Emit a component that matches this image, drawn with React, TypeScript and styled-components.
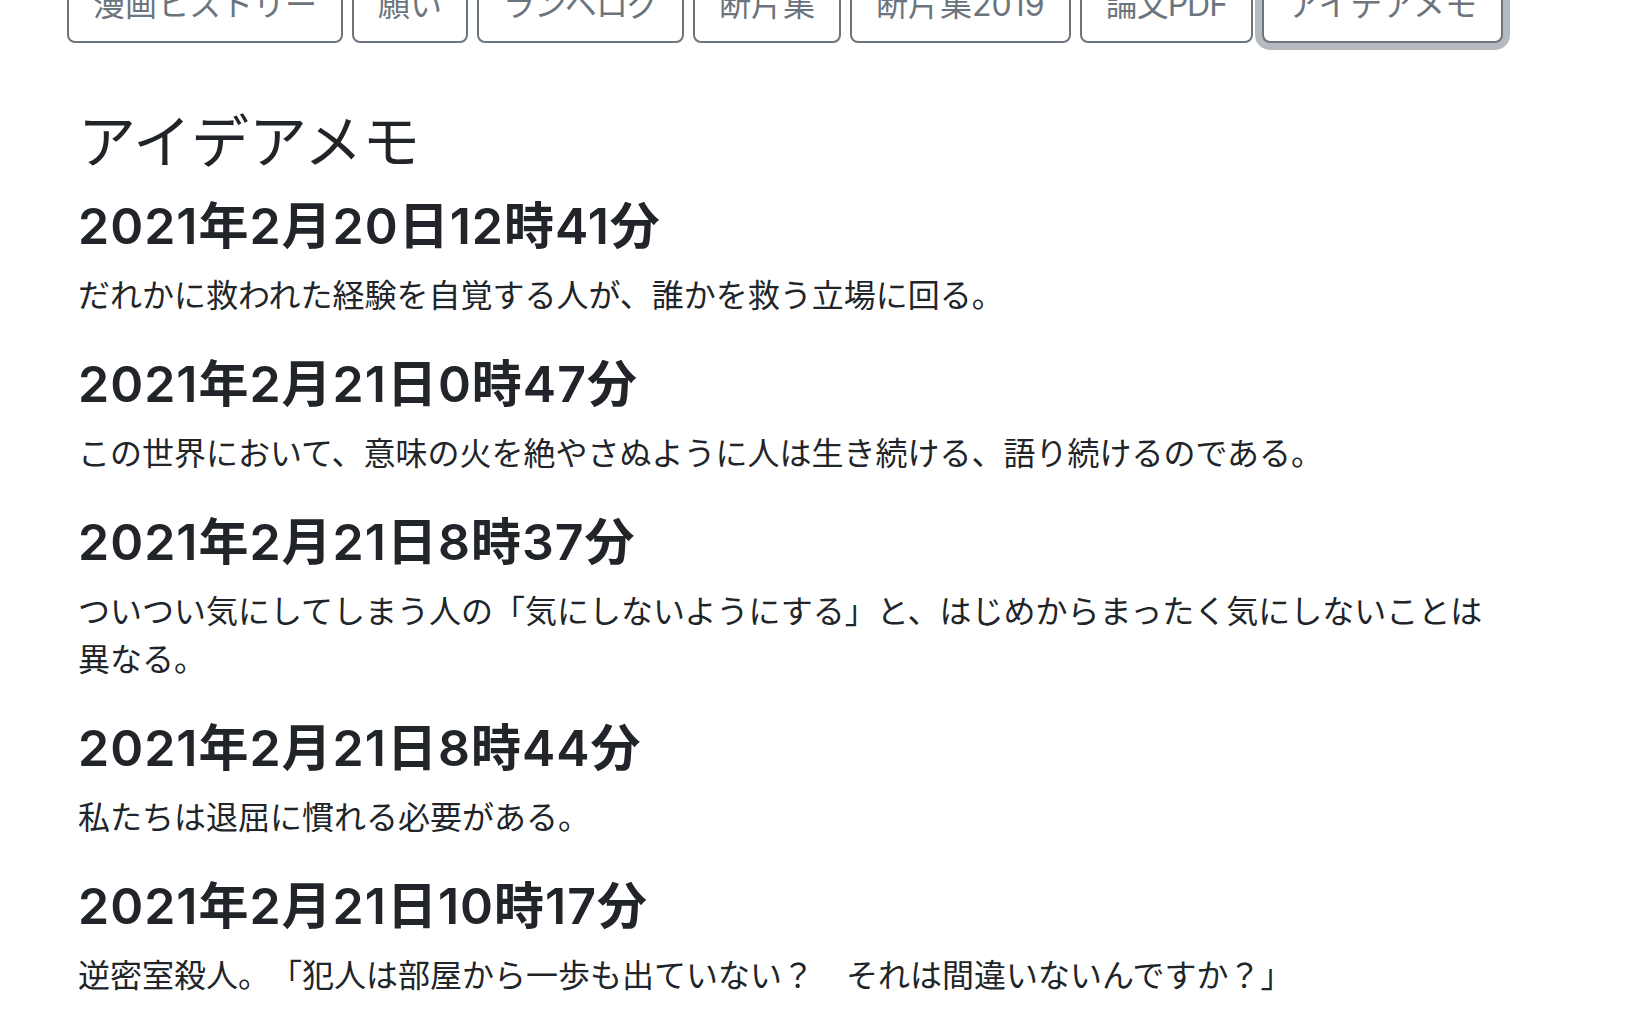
import React from "react";
import styled, { createGlobalStyle } from "styled-components";

const GlobalStyle = createGlobalStyle`
  html, body {
    margin: 0;
    padding: 0;
    background: #ffffff;
  }
  body {
    font-family: Inter, "Noto Sans CJK JP", sans-serif;
    color: #212529;
    font-size: 32px;
    line-height: 48px;
    overflow: hidden;
    text-spacing-trim: space-all;
  }
`;

const Page = styled.div`
  padding-left: 67px;
  width: 1575px;
`;

const Nav = styled.nav`
  display: flex;
  gap: 9px;
  margin-top: -33px;
`;

const TabButton = styled.button<{ $active?: boolean; $tight?: boolean }>`
  font-family: Inter, "Noto Sans CJK JP", sans-serif;
  font-size: 32px;
  line-height: 48px;
  padding: 12px 24px;
  color: #6c757d;
  background: #ffffff;
  border: 2px solid #6c757d;
  border-radius: 8px;
  white-space: nowrap;
  letter-spacing: ${(p) => (p.$tight ? "-1px" : "0")};
  box-shadow: ${(p) => (p.$active ? "0 0 0 7px rgba(108, 117, 125, 0.5)" : "none")};
`;

const Content = styled.main`
  padding-left: 11px;
  margin-top: 66px;
`;

const PageTitle = styled.h3`
  margin: 0 0 21px;
  font-size: 58px;
  line-height: 67px;
  font-weight: 400;
`;

const MemoDate = styled.h4`
  margin: 0 0 17px;
  font-size: 50px;
  line-height: 58px;
  font-weight: 600;
  letter-spacing: 1px;
`;

const MemoText = styled.p`
  margin: 0 0 35px;
  max-width: 1420px;
  text-spacing-trim: space-all;
`;

const tabs = [
  "漫画ヒストリー",
  "願い",
  "ランベログ",
  "断片集",
  "断片集2019",
  "論文PDF",
  "アイデアメモ"
];

const memos = [
  {
    date: "2021年2月20日12時41分",
    text: "だれかに救われた経験を自覚する人が、誰かを救う立場に回る。"
  },
  {
    date: "2021年2月21日0時47分",
    text: "この世界において、意味の火を絶やさぬように人は生き続ける、語り続けるのである。"
  },
  {
    date: "2021年2月21日8時37分",
    text: "ついつい気にしてしまう人の「気にしないようにする」と、はじめからまったく気にしないことは異なる。"
  },
  {
    date: "2021年2月21日8時44分",
    text: "私たちは退屈に慣れる必要がある。"
  },
  {
    date: "2021年2月21日10時17分",
    text: "逆密室殺人。「犯人は部屋から一歩も出ていない？　それは間違いないんですか？」"
  }
];

export default function App() {
  return (
    <>
      <GlobalStyle />
      <Page>
        <Nav>
          {tabs.map((t) => (
            <TabButton
              key={t}
              $active={t === "アイデアメモ"}
              $tight={t === "ランベログ" || t === "論文PDF"}
            >
              {t}
            </TabButton>
          ))}
        </Nav>
        <Content>
          <PageTitle>アイデアメモ</PageTitle>
          {memos.map((m) => (
            <React.Fragment key={m.date}>
              <MemoDate>{m.date}</MemoDate>
              <MemoText>{m.text}</MemoText>
            </React.Fragment>
          ))}
        </Content>
      </Page>
    </>
  );
}
